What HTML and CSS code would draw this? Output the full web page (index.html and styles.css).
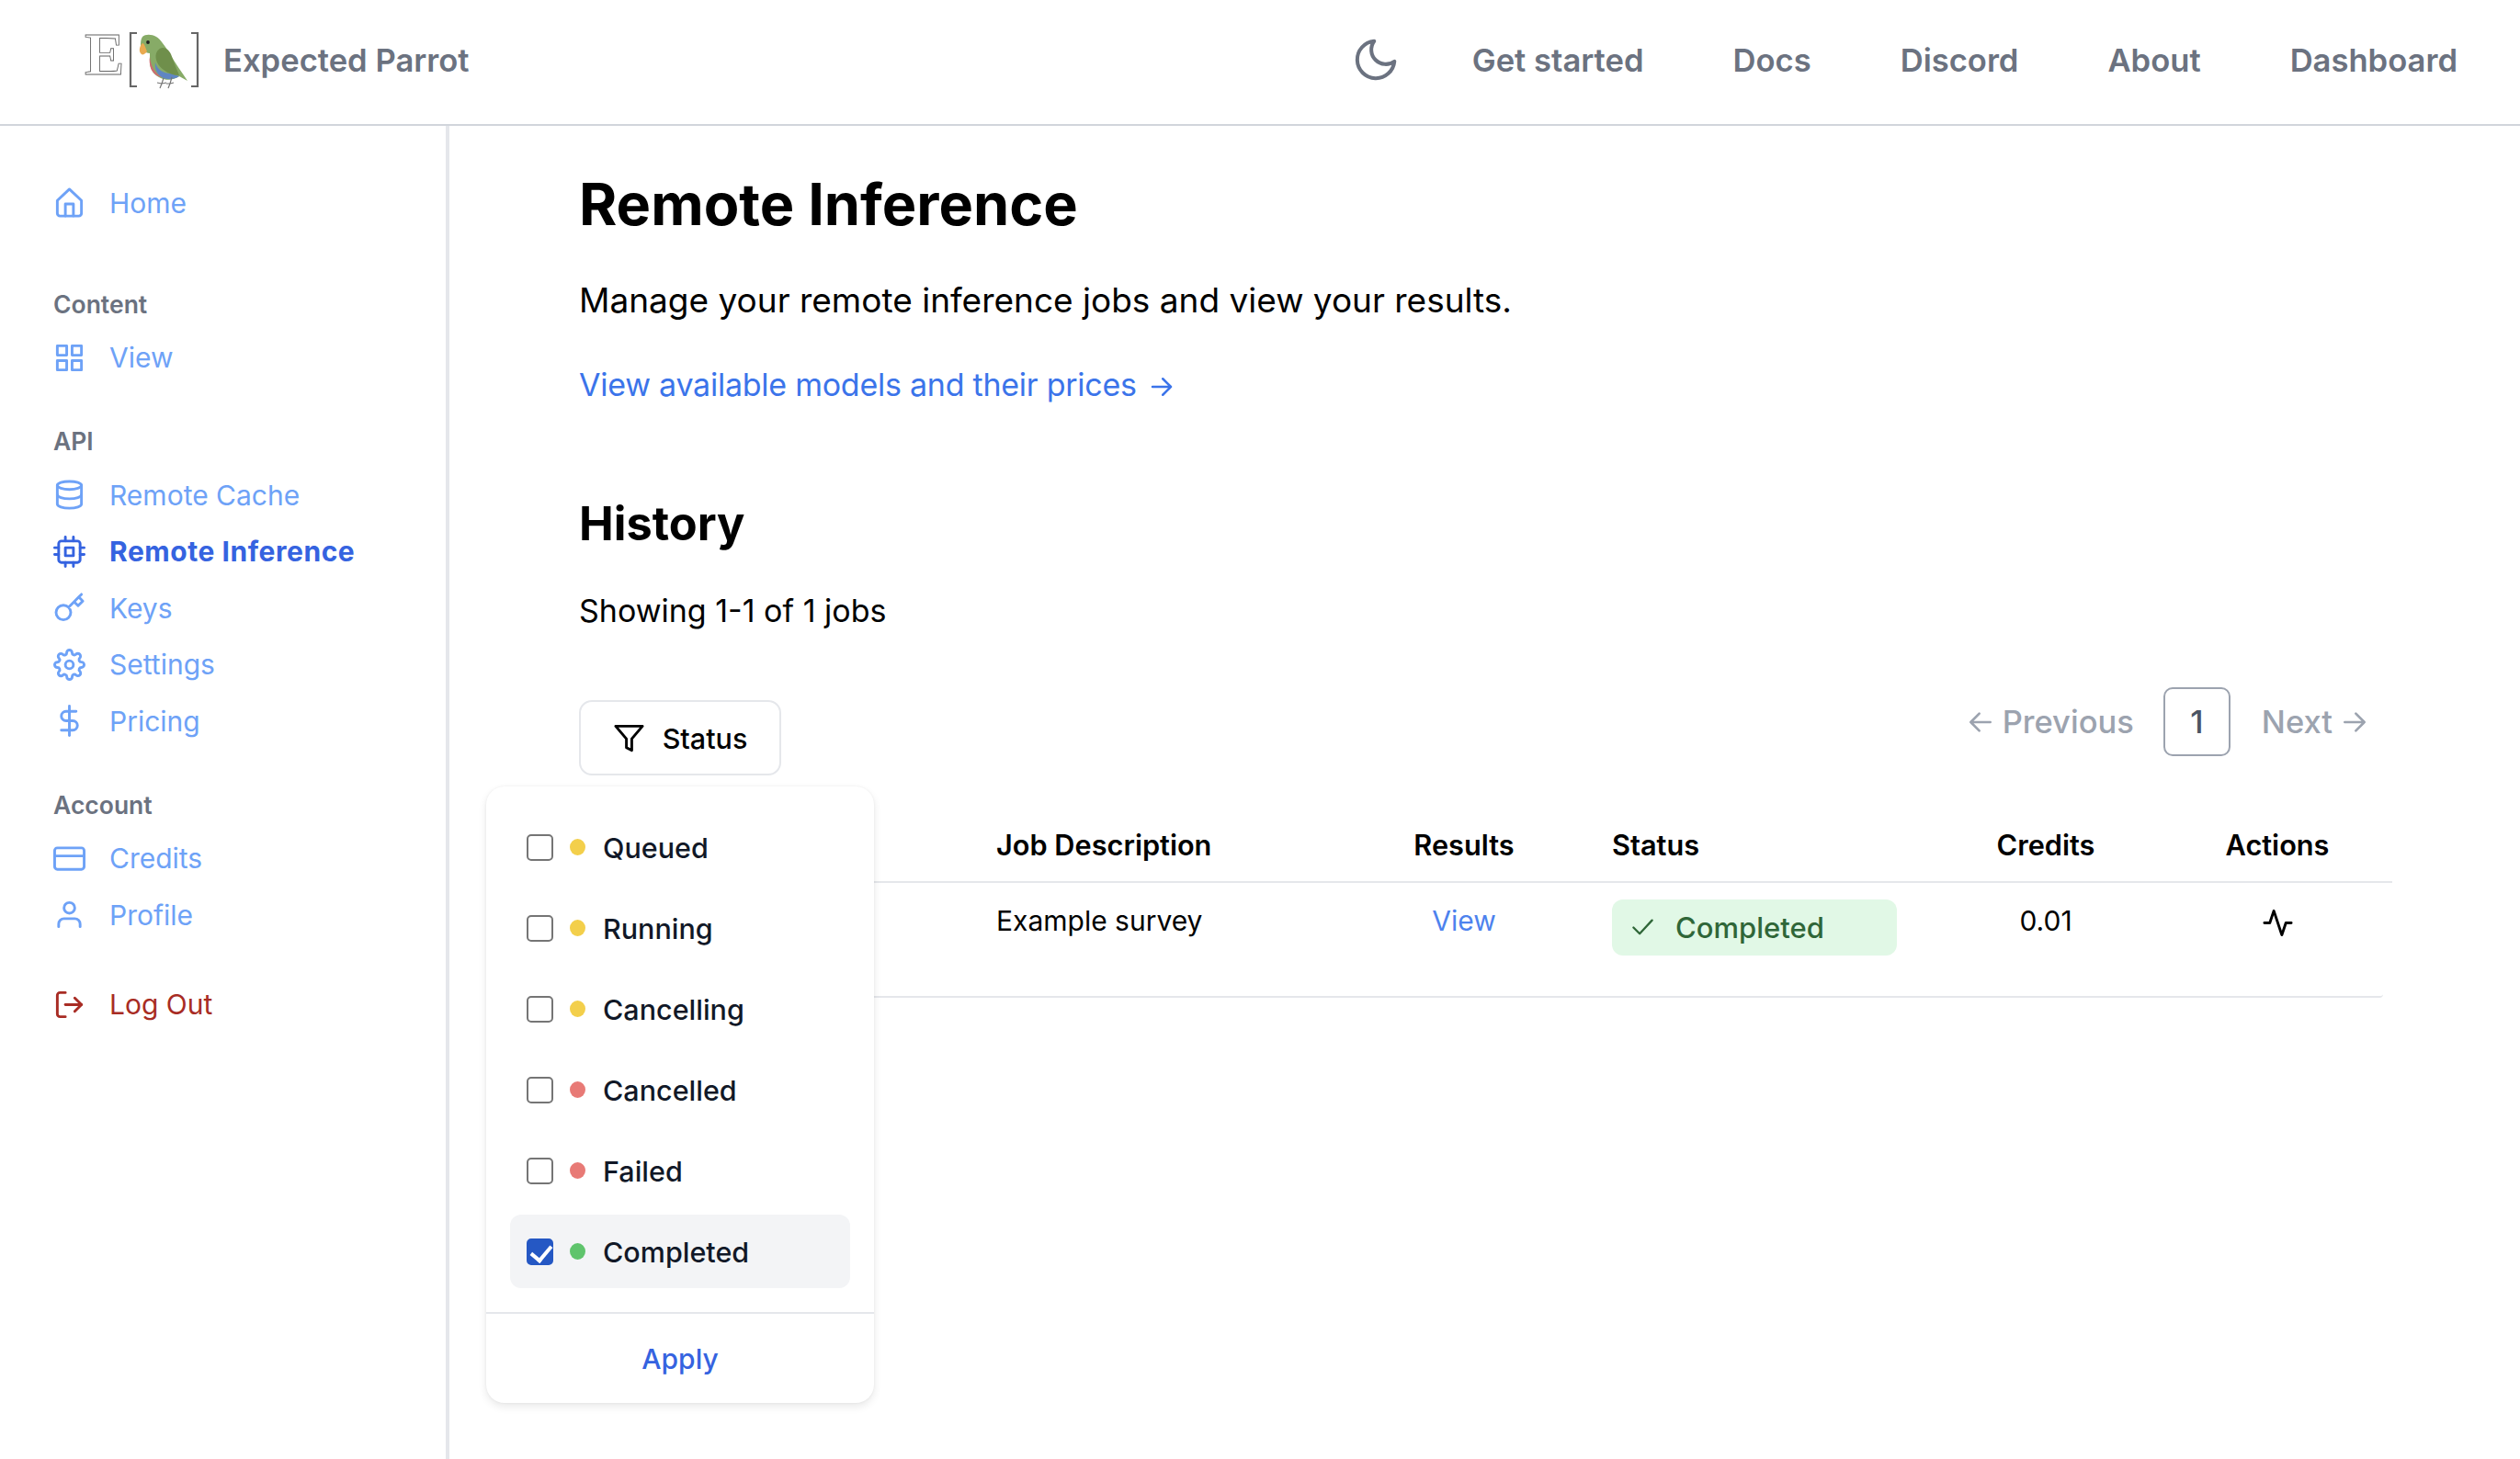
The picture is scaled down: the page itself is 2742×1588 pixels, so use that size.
FILE: index.html
```html
<!DOCTYPE html>
<html lang="en">
<head>
    <meta charset="UTF-8">
    <title>Remote Inference</title>
    <link rel="stylesheet" href="styles.css">
</head>
<body>
    <header class="topbar">
        <a class="brand" href="#">
            <svg class="brand-logo" viewBox="90 30 130 70" fill="none">
                <text class="logo-e" x="92" y="81">E</text>
                <polyline points="149,36 142,36 142,94 149,94" stroke="#666" stroke-width="2.2"/>
                <polyline points="208,36 215,36 215,94 208,94" stroke="#666" stroke-width="2.2"/>
                <path d="M155 40C158 37 165 37 170 40C175 43 180 51 185 59C191 69 198 79 204 88L195 83C190 87 181 88 175 85C168 82 163 76 163 68L163 58C158 58 154 54 153 50C153 46 153 43 155 40Z" fill="#87ab67"/>
                <path d="M163 62C164 72 169 81 177 84C172 84 166 80 164 74C163 70 162 66 163 62Z" fill="#cf6a70"/>
                <path d="M169 68C171 76 178 80 186 80L195 83C189 87 181 87 176 84C171 81 168 75 169 68Z" fill="#5f86c2"/>
                <path d="M177 52C181 52 184 55 186 59C189 67 192 75 195 82C189 82 183 80 178 76C172 72 168 64 170 58C171 55 174 52 177 52Z" fill="#6f8f4b"/>
                <path d="M155 47C157 47 158 51 160 56C158 59 155 60 154 59C151 57 151 51 155 47Z" fill="#e9aa50"/>
                <circle cx="161" cy="46" r="1.9" fill="#222"/>
                <path d="M178 85L176 91M176 91L174 96M176 91L181 90M187 84L185 91M185 91L183 96M185 91L189 90M176 91L171 90M185 91L181 91" stroke="#777" stroke-width="1.2"/>
            </svg>
            <span>Expected Parrot</span>
        </a>
        <nav class="topnav">
            <svg class="moon" viewBox="0 0 24 24" fill="none" stroke="currentColor" stroke-width="1.8" stroke-linecap="round" stroke-linejoin="round"><path d="M21 12.79A9 9 0 1 1 11.21 3 7 7 0 0 0 21 12.79z"/></svg>
            <a href="#">Get started</a>
            <a href="#">Docs</a>
            <a href="#">Discord</a>
            <a href="#">About</a>
            <a href="#">Dashboard</a>
        </nav>
    </header>

    <div class="layout">
        <aside class="sidebar">
            <div class="nav-home">
                <a class="nav-item" href="#">
                    <svg class="icon" viewBox="0 0 24 24"><path d="M3 10.5 12 2l9 8.5V20a2 2 0 0 1-2 2H5a2 2 0 0 1-2-2z"/><path d="M9 22v-9h6v9"/></svg>
                    Home
                </a>
            </div>
            <div class="nav-group">
                <div class="nav-label">Content</div>
                <a class="nav-item" href="#">
                    <svg class="icon" viewBox="0 0 24 24"><rect x="3" y="3" width="7" height="7"/><rect x="14" y="3" width="7" height="7"/><rect x="14" y="14" width="7" height="7"/><rect x="3" y="14" width="7" height="7"/></svg>
                    View
                </a>
            </div>
            <div class="nav-group">
                <div class="nav-label">API</div>
                <a class="nav-item" href="#">
                    <svg class="icon" viewBox="0 0 24 24"><ellipse cx="12" cy="5" rx="9" ry="3"/><path d="M21 12c0 1.66-4 3-9 3s-9-1.34-9-3"/><path d="M3 5v14c0 1.66 4 3 9 3s9-1.34 9-3V5"/></svg>
                    Remote Cache
                </a>
                <a class="nav-item active" href="#">
                    <svg class="icon" viewBox="0 0 24 24"><rect x="4" y="4" width="16" height="16" rx="2"/><rect x="9" y="9" width="6" height="6"/><path d="M9 1v3M15 1v3M9 20v3M15 20v3M20 9h3M20 14h3M1 9h3M1 14h3"/></svg>
                    Remote Inference
                </a>
                <a class="nav-item" href="#">
                    <svg class="icon" viewBox="0 0 24 24"><path d="M21 2l-2 2m-7.61 7.61a5.5 5.5 0 1 1-7.778 7.778 5.5 5.5 0 0 1 7.777-7.777zm0 0L15.5 7.5m0 0l3 3L22 7l-3-3m-3.5 3.5L19 4"/></svg>
                    Keys
                </a>
                <a class="nav-item" href="#">
                    <svg class="icon" viewBox="0 0 24 24"><circle cx="12" cy="12" r="3"/><path d="M19.4 15a1.65 1.65 0 0 0 .33 1.82l.06.06a2 2 0 0 1 0 2.83 2 2 0 0 1-2.83 0l-.06-.06a1.65 1.65 0 0 0-1.82-.33 1.65 1.65 0 0 0-1 1.51V21a2 2 0 0 1-2 2 2 2 0 0 1-2-2v-.09A1.65 1.65 0 0 0 9 19.4a1.65 1.65 0 0 0-1.82.33l-.06.06a2 2 0 0 1-2.83 0 2 2 0 0 1 0-2.83l.06-.06a1.65 1.65 0 0 0 .33-1.82 1.65 1.65 0 0 0-1.51-1H3a2 2 0 0 1-2-2 2 2 0 0 1 2-2h.09A1.65 1.65 0 0 0 4.6 9a1.65 1.65 0 0 0-.33-1.82l-.06-.06a2 2 0 0 1 0-2.83 2 2 0 0 1 2.83 0l.06.06a1.65 1.65 0 0 0 1.82.33H9a1.65 1.65 0 0 0 1-1.51V3a2 2 0 0 1 2-2 2 2 0 0 1 2 2v.09a1.65 1.65 0 0 0 1 1.51 1.65 1.65 0 0 0 1.82-.33l.06-.06a2 2 0 0 1 2.83 0 2 2 0 0 1 0 2.83l-.06.06a1.65 1.65 0 0 0-.33 1.82V9a1.65 1.65 0 0 0 1.51 1H21a2 2 0 0 1 2 2 2 2 0 0 1-2 2h-.09a1.65 1.65 0 0 0-1.51 1z"/></svg>
                    Settings
                </a>
                <a class="nav-item" href="#">
                    <svg class="icon" viewBox="0 0 24 24"><path d="M12 1v22"/><path d="M17 5H9.5a3.5 3.5 0 0 0 0 7h5a3.5 3.5 0 0 1 0 7H6"/></svg>
                    Pricing
                </a>
            </div>
            <div class="nav-group">
                <div class="nav-label">Account</div>
                <a class="nav-item" href="#">
                    <svg class="icon" viewBox="0 0 24 24"><rect x="1" y="4" width="22" height="16" rx="2"/><path d="M1 10h22"/></svg>
                    Credits
                </a>
                <a class="nav-item" href="#">
                    <svg class="icon" viewBox="0 0 24 24"><path d="M20 21v-2a4 4 0 0 0-4-4H8a4 4 0 0 0-4 4v2"/><circle cx="12" cy="7" r="4"/></svg>
                    Profile
                </a>
            </div>
            <div class="nav-logout">
                <a class="nav-item logout" href="#">
                    <svg class="icon" viewBox="0 0 24 24"><path d="M9 21H5a2 2 0 0 1-2-2V5a2 2 0 0 1 2-2h4"/><path d="M16 17l5-5-5-5"/><path d="M21 12H9"/></svg>
                    Log Out
                </a>
            </div>
        </aside>

        <main class="content">
            <h1>Remote Inference</h1>
            <p class="lead">Manage your remote inference jobs and view your results.</p>
            <a class="models-link" href="#">View available models and their prices
                <svg class="link-arrow" viewBox="0 0 24 24"><path d="M4 12h16M13 5l7 7-7 7"/></svg>
            </a>

            <h2>History</h2>
            <p class="showing">Showing 1-1 of 1 jobs</p>

            <div class="controls">
                <div class="filter">
                    <button class="filter-btn" type="button">
                        <svg class="icon" viewBox="0 0 24 24"><path d="M22 3H2l8 9.46V19l4 2v-8.54L22 3z"/></svg>
                        Status
                    </button>
                    <div class="dropdown">
                        <div class="options">
                            <label class="option"><input type="checkbox"><span class="dot yellow"></span>Queued</label>
                            <label class="option"><input type="checkbox"><span class="dot yellow"></span>Running</label>
                            <label class="option"><input type="checkbox"><span class="dot yellow"></span>Cancelling</label>
                            <label class="option"><input type="checkbox"><span class="dot red"></span>Cancelled</label>
                            <label class="option"><input type="checkbox"><span class="dot red"></span>Failed</label>
                            <label class="option selected"><input type="checkbox" checked><span class="dot green"></span>Completed</label>
                        </div>
                        <div class="dropdown-footer"><a href="#">Apply</a></div>
                    </div>
                </div>
                <div class="pagination">
                    <a class="page-link" href="#"><svg class="page-arrow" viewBox="0 0 24 24"><path d="M20 12H4M11 5l-7 7 7 7"/></svg>Previous</a>
                    <span class="page-num">1</span>
                    <a class="page-link" href="#">Next<svg class="page-arrow" viewBox="0 0 24 24"><path d="M4 12h16M13 5l7 7-7 7"/></svg></a>
                </div>
            </div>

            <div class="jobs">
                <div class="jobs-row jobs-head">
                    <div></div>
                    <div>Job Description</div>
                    <div class="center">Results</div>
                    <div class="status-col">Status</div>
                    <div class="center">Credits</div>
                    <div class="center">Actions</div>
                </div>
                <div class="jobs-row jobs-body">
                    <div></div>
                    <div>Example survey</div>
                    <div class="center"><a href="#">View</a></div>
                    <div class="status-col">
                        <span class="badge"><svg class="badge-check" viewBox="0 0 24 24"><path d="M21 5 9 18l-6-6"/></svg>Completed</span>
                    </div>
                    <div class="center">0.01</div>
                    <div class="center"><svg class="icon" viewBox="0 0 24 24"><path d="M22 12h-4l-3 9L9 3l-3 9H2"/></svg></div>
                </div>
            </div>
        </main>
    </div>
</body>
</html>
```

FILE: styles.css
```css
* { box-sizing: border-box; }
html, body { height: 100%; }
body { margin: 0; font-family: Inter, "Noto Sans", sans-serif; color: #000; background: #fff; overflow: hidden; display: flex; flex-direction: column; }
a { text-decoration: none; color: inherit; }

/* top bar */
.topbar { height: 137px; flex: none; display: flex; justify-content: space-between; align-items: center; padding: 0 68px 5px 90px; border-bottom: 2px solid #d1d5db; }
.brand { display: flex; align-items: center; gap: 23px; font-size: 34.6px; font-weight: 600; color: #6b7280; }
.brand-logo { width: 130px; height: 70px; display: block; overflow: visible; }
.logo-e { font-family: "Liberation Serif", serif; font-size: 65px; fill: #fff; stroke: #666; stroke-width: .9; }
.topnav { display: flex; align-items: center; gap: 97px; font-size: 34.6px; font-weight: 600; color: #6b7280; }
.moon { width: 54px; height: 54px; margin-right: -19px; display: block; }

/* sidebar */
.layout { flex: 1; display: flex; min-height: 0; }
.sidebar { width: 489px; flex: none; padding: 53px 0 0 58px; border-right: 4px solid #e5e7eb; }
.nav-home { margin-bottom: 59px; }
.nav-group { margin-bottom: 40px; }
.nav-logout { margin-top: -4px; }
.nav-label { height: 40px; line-height: 40px; font-size: 26.5px; font-weight: 600; color: #6b7280; margin-bottom: 8px; }
.nav-item { height: 61.5px; display: flex; align-items: center; gap: 26px; font-size: 30px; color: #6ea2f7; }
.nav-item.active { color: #3563e0; font-weight: 700; letter-spacing: .55px; }
.nav-item.logout { color: #a82c24; }
.icon { width: 35px; height: 35px; flex: none; fill: none; stroke: currentColor; stroke-width: 2; stroke-linecap: round; stroke-linejoin: round; display: block; }

/* main column */
.content { flex: 1; min-width: 0; padding: 50px 139px 0 141px; }
h1 { margin: 0; font-size: 63px; line-height: 70px; font-weight: 700; }
.lead { margin: 45px 0 0; font-size: 37px; line-height: 50px; }
.models-link { margin-top: 42px; display: flex; align-items: center; gap: 12px; font-size: 34px; letter-spacing: -.25px; line-height: 50px; color: #3b74ea; }
.link-arrow { width: 30px; height: 30px; fill: none; stroke: currentColor; stroke-width: 2; stroke-linecap: round; stroke-linejoin: round; margin-top: 4px; }
h2 { margin: 96px 0 0; font-size: 50.5px; line-height: 60px; font-weight: 700; }
.showing { margin: 40px 0 0; font-size: 34px; line-height: 50px; }

/* filter + pagination */
.controls { margin-top: 58px; display: flex; justify-content: space-between; align-items: flex-start; padding-right: 25px; }
.filter { position: relative; margin-top: 14px; }
.filter-btn { width: 220px; height: 82px; display: flex; align-items: center; justify-content: center; gap: 19px; border: 2px solid #e5e7eb; border-radius: 14px; background: #fff; font-family: inherit; font-size: 30.5px; font-weight: 500; color: #000; padding: 0; }
.dropdown { position: absolute; left: -101px; top: 94px; width: 422px; height: 671px; background: #fff; border-radius: 20px; box-shadow: 0 4px 10px rgba(0,0,0,.09), 0 0 3px rgba(0,0,0,.06); z-index: 5; display: flex; flex-direction: column; }
.options { flex: 1; padding: 26px 26px 0; display: flex; flex-direction: column; gap: 8px; }
.option { height: 80px; display: flex; align-items: center; padding-left: 18px; border-radius: 12px; font-size: 30.5px; font-weight: 500; color: #111827; }
.option.selected { background: #f3f4f6; }
.option input { appearance: none; width: 29px; height: 29px; margin: 0 18px 0 0; border: 2.5px solid #757575; border-radius: 5px; position: relative; flex: none; background: #fff; }
.option input:checked { background: #2558c4; border-color: #2558c4; }
.option input:checked::after { content: ""; position: absolute; left: 7px; top: 1px; width: 10px; height: 18px; border: solid #fff; border-width: 0 4px 4px 0; transform: rotate(40deg); }
.dot { width: 17px; height: 18px; border-radius: 50%; margin-right: 19px; flex: none; }
.dot.yellow { background: #f3cf4b; }
.dot.red { background: #e87a76; }
.dot.green { background: #5fc46c; }
.dropdown-footer { height: 99px; flex: none; border-top: 2px solid #e5e7eb; display: flex; align-items: center; justify-content: center; font-size: 30px; font-weight: 500; color: #3563e0; }

.pagination { display: flex; align-items: center; font-size: 34.5px; font-weight: 500; color: #9ca3af; }
.page-link { display: flex; align-items: center; gap: 8px; }
.page-arrow { width: 32px; height: 32px; fill: none; stroke: currentColor; stroke-width: 2; stroke-linecap: round; stroke-linejoin: round; }
.page-num { width: 73px; height: 75px; margin: 0 34px 0 32px; border: 2px solid #9ca3af; border-radius: 10px; display: flex; align-items: center; justify-content: center; color: #4b5563; }

/* jobs table */
.jobs { margin-top: 36px; }
.jobs-row { display: grid; grid-template-columns: 454px 400px 218px 397px 254px 250px; }
.jobs-head { height: 81px; align-items: center; border-bottom: 2px solid #e5e7eb; font-size: 30.7px; font-weight: 600; }
.jobs-body { height: 125px; margin-right: 10px; padding-top: 16px; border-bottom: 2px solid #e5e7eb; border-radius: 0 0 4px 0; font-size: 30px; line-height: 50px; }
.center { text-align: center; }
.center .icon { margin: 10px auto 0; }
.jobs-body a { color: #4d82ee; }
.status-col { padding-left: 52px; }
.badge { width: 310px; height: 61px; margin-top: 2px; display: flex; align-items: center; gap: 22px; padding-left: 20px; background: #e1f8e6; border-radius: 12px; font-size: 31px; font-weight: 500; color: #2f6638; }
.badge-check { width: 27px; height: 27px; fill: none; stroke: currentColor; stroke-width: 2; stroke-linecap: round; stroke-linejoin: round; flex: none; }
```
